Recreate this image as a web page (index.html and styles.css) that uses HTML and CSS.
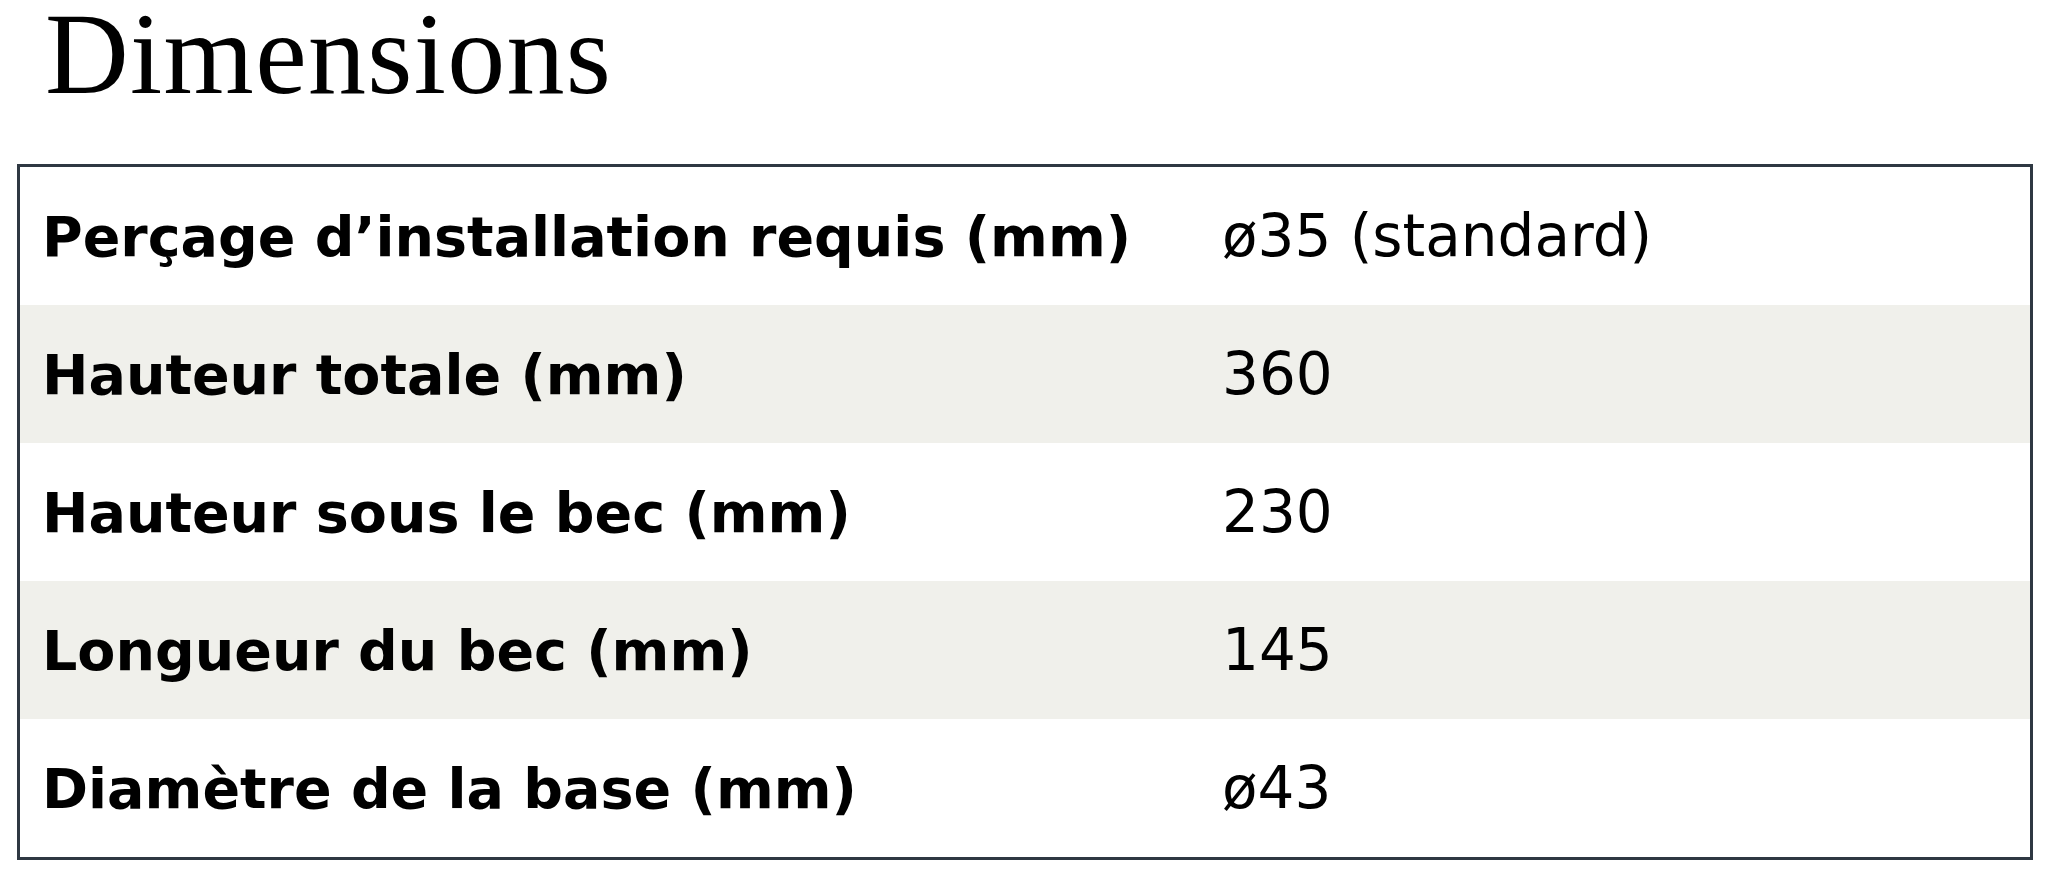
FILE: index.html
```html
<!DOCTYPE html>
<html lang="fr">
<head>
<meta charset="utf-8">
<title>Dimensions</title>
<link rel="stylesheet" href="styles.css">
</head>
<body>
<main class="page">
  <h1 class="title">Dimensions</h1>
  <div class="specs">
    <div class="row">
      <div class="label">Perçage d’installation requis (mm)</div>
      <div class="value">ø35 (standard)</div>
    </div>
    <div class="row shaded">
      <div class="label">Hauteur totale (mm)</div>
      <div class="value">360</div>
    </div>
    <div class="row">
      <div class="label">Hauteur sous le bec (mm)</div>
      <div class="value">230</div>
    </div>
    <div class="row shaded">
      <div class="label">Longueur du bec (mm)</div>
      <div class="value">145</div>
    </div>
    <div class="row">
      <div class="label">Diamètre de la base (mm)</div>
      <div class="value">ø43</div>
    </div>
  </div>
</main>
</body>
</html>
```
FILE: styles.css
```css
* { box-sizing: border-box; }
html, body { margin: 0; padding: 0; background: #ffffff; }
body { color: #000; }
.page {
  padding: 0 15px 0 17px;
}
.title {
  margin: 0 0 56px 0;
  padding-left: 28px;
  font-family: "Liberation Serif", "Times New Roman", serif;
  font-weight: 400;
  font-size: 116px;
  line-height: 108px;
  letter-spacing: 1.3px;
  color: #000;
}
.specs {
  border: 3px solid #2f3842;
  display: flex;
  flex-direction: column;
}
.row {
  display: grid;
  grid-template-columns: 1180px 1fr;
  height: 138px;
  align-items: center;
}
.row.shaded { background: #f0f0eb; }
.label {
  padding-left: 22px;
  font-family: "DejaVu Sans", Verdana, sans-serif;
  font-weight: 700;
  font-size: 55.5px;
  color: #000;
}
.value {
  padding-left: 22px;
  font-family: "DejaVu Sans", Verdana, sans-serif;
  font-weight: 400;
  font-size: 58px;
  color: #000;
}
```
